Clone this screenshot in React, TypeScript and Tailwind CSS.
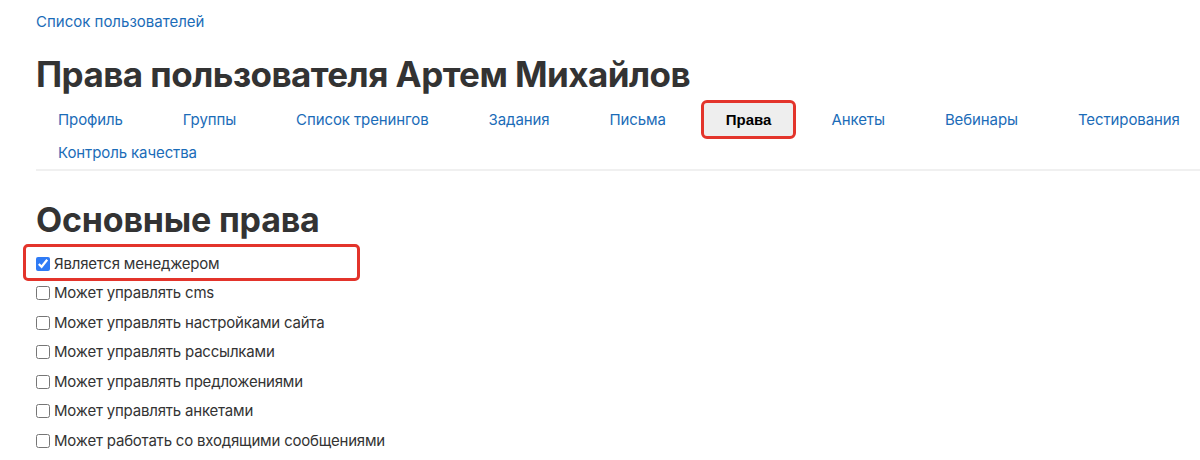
import React from "react";

const tabs = [
  "Профиль",
  "Группы",
  "Список тренингов",
  "Задания",
  "Письма",
  "Права",
  "Анкеты",
  "Вебинары",
  "Тестирования",
  "Контроль качества",
];

const perms = [
  { label: "Является менеджером", checked: true },
  { label: "Может управлять cms", checked: false },
  { label: "Может управлять настройками сайта", checked: false },
  { label: "Может управлять рассылками", checked: false },
  { label: "Может управлять предложениями", checked: false },
  { label: "Может управлять анкетами", checked: false },
  { label: "Может работать со входящими сообщениями", checked: false },
];

export default function App() {
  return (
    <div
      className="min-h-[460px] overflow-hidden bg-white pl-[36px] pt-[12px] text-[#333333]"
      style={{ fontFamily: "Inter, 'Noto Sans', sans-serif" }}
    >
      <a className="block text-[15px] leading-[20px] text-[#1b6cb8]">
        Список пользователей
      </a>
      <h1 className="mt-[20px] text-[35px] font-bold leading-[44px] text-[#333333] tracking-[-0.55px]">
        Права пользователя Артем Михайлов
      </h1>
      <ul className="mt-[7px] flex w-[1200px] flex-wrap border-b-2 border-[#f0f0f0]">
        {tabs.map((t) =>
          t === "Права" ? (
            <li
              key={t}
              className="relative mr-[16px] h-[33px] rounded-[4px] bg-[#eeeeee] px-[22px] text-[15px] font-bold leading-[33px] text-black"
              style={{ fontFamily: "'Liberation Sans', Arial, sans-serif" }}
            >
              {t}
              <span className="absolute -inset-[3px] rounded-[6px] border-[3px] border-[#e3342b]" />
            </li>
          ) : (
            <li
              key={t}
              className="mr-[16px] h-[33px] px-[22px] text-[15px] leading-[33px] text-[#1b6cb8] tracking-[-0.1px]"
            >
              {t}
            </li>
          )
        )}
      </ul>
      <h2 className="mt-[29px] text-[34px] font-bold leading-[40px] text-[#333333] tracking-[-0.2px]">
        Основные права
      </h2>
      <div className="mt-[9px] flex flex-col">
        {perms.map((p, i) => (
          <label
            key={p.label}
            className="relative flex h-[29.5px] shrink-0 items-center gap-[4px] text-[15px] text-[#333333] tracking-[-0.2px]"
          >
            <input
              type="checkbox"
              defaultChecked={p.checked}
              className="m-0 h-[14px] w-[14px] accent-[#2f7bf5]"
            />
            <span>{p.label}</span>
            {i === 0 && (
              <span className="pointer-events-none absolute left-[-13px] top-[-5px] h-[37px] w-[337px] rounded-[5px] border-[3px] border-[#e3342b]" />
            )}
          </label>
        ))}
      </div>
    </div>
  );
}
